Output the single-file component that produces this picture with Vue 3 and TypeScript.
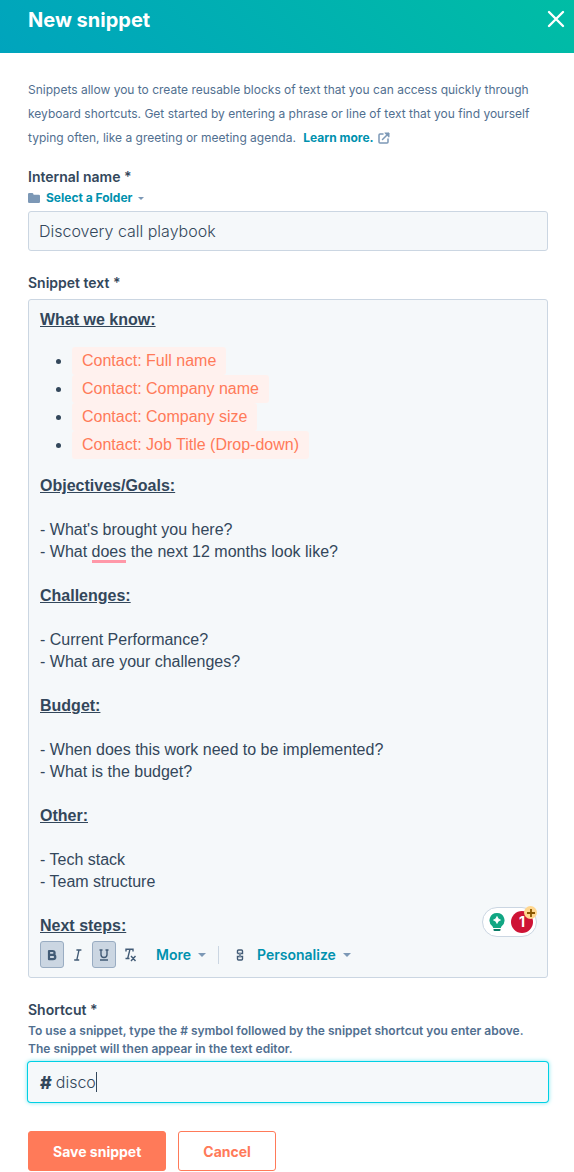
<script setup lang="ts">
import { ref } from 'vue'

interface Section {
  title: string
  lines: string[][]
}

const internalName = ref('Discovery call playbook')
const shortcut = ref('disco')

const tokens: string[] = [
  'Contact: Full name',
  'Contact: Company name',
  'Contact: Company size',
  'Contact: Job Title (Drop-down)',
]

// A line is split in three when its middle part carries a spelling mark.
const sections: Section[] = [
  {
    title: 'Objectives/Goals:',
    lines: [["- What's brought you here?"], ['- What ', 'does', ' the next 12 months look like?']],
  },
  { title: 'Challenges:', lines: [['- Current Performance?'], ['- What are your challenges?']] },
  { title: 'Budget:', lines: [['- When does this work need to be implemented?'], ['- What is the budget?']] },
  { title: 'Other:', lines: [['- Tech stack'], ['- Team structure']] },
]
</script>

<template>
  <section class="panel" aria-labelledby="panel-title">
    <header class="header">
      <h1 id="panel-title">New snippet</h1>
      <button class="close" type="button" aria-label="Close">
        <svg width="18" height="18" viewBox="0 0 18 18" fill="none" stroke="#fff" stroke-width="2.4" stroke-linecap="round">
          <path d="M2 2 16 16M16 2 2 16" />
        </svg>
      </button>
    </header>

    <form class="body" @submit.prevent>
      <p class="intro">
        Snippets allow you to create reusable blocks of text that you can access quickly through
        keyboard shortcuts. Get started by entering a phrase or line of text that you find yourself
        typing often, like a greeting or meeting agenda.
        <a class="learn" href="#">Learn more.<svg width="12" height="12" viewBox="0 0 12 12" fill="none" stroke="#7c98b6" stroke-width="1.5" stroke-linecap="round" stroke-linejoin="round">
          <path d="M5 2H2Q1 2 1 3V10Q1 11 2 11H9Q10 11 10 10V7M4.5 7.5 10.5 1.5" />
          <path d="M7.2 1H11V4.8Z" fill="#7c98b6" stroke-width="1" />
        </svg></a>
      </p>

      <div class="field">
        <label class="label" for="internal-name">Internal name *</label>
        <button class="folder" type="button">
          <svg width="12" height="10" viewBox="0 0 12 10" fill="#7c98b6">
            <path d="M0 1.2Q0 0 1.2 0H4.2Q5.2 0 5.4 1L5.6 1.8H10.8Q12 1.8 12 3V8.8Q12 10 10.8 10H1.2Q0 10 0 8.8Z" />
          </svg>
          <span>Select a Folder</span>
          <svg width="6" height="3" viewBox="0 0 6 3" fill="#7c98b6"><path d="M0 0H6L3 3Z" /></svg>
        </button>
        <input id="internal-name" v-model="internalName" class="input" type="text" />
      </div>

      <div class="field">
        <span id="snippet-label" class="label">Snippet text *</span>
        <div class="editor">
          <div class="content" contenteditable="true" role="textbox" aria-multiline="true" aria-labelledby="snippet-label" spellcheck="false">
            <div class="heading">What we know:</div>
            <ul class="tokens">
              <li v-for="token in tokens" :key="token"><span class="token">{{ token }}</span></li>
            </ul>
            <div v-for="section in sections" :key="section.title" class="section">
              <div class="heading">{{ section.title }}</div>
              <div class="lines">
                <div v-for="(line, i) in section.lines" :key="i" class="line"><span v-for="(part, j) in line" :key="j" :class="{ flagged: j === 1 }">{{ part }}</span></div>
              </div>
            </div>
            <div class="heading">Next steps:</div>
          </div>

          <div class="toolbar" role="toolbar" aria-label="Formatting">
            <button class="tool active" type="button" aria-label="Bold" aria-pressed="true">
              <svg width="14" height="14" viewBox="0 0 14 14" fill="none" stroke="#425b76" stroke-width="2.2" stroke-linejoin="round">
                <path d="M4 3H7.6Q9.6 3 9.6 4.9T7.6 6.8H4ZM4 6.8H8Q10.3 6.8 10.3 9T8 11.2H4Z" />
              </svg>
            </button>
            <button class="tool" type="button" aria-label="Italic">
              <svg width="14" height="14" viewBox="0 0 14 14" fill="none" stroke="#425b76" stroke-width="1.3">
                <path d="M5.4 2H10.4M3.2 12H8.2M8 2 5.8 12" />
              </svg>
            </button>
            <button class="tool active" type="button" aria-label="Underline" aria-pressed="true">
              <svg width="14" height="14" viewBox="0 0 14 14" fill="none" stroke="#425b76" stroke-width="1.4">
                <path d="M2.5 2H5.5M8.5 2H11.5M4 2V6.5Q4 9.5 7 9.5T10 6.5V2M3 12H11" />
              </svg>
            </button>
            <button class="tool" type="button" aria-label="Clear formatting">
              <svg width="14" height="14" viewBox="0 0 14 14" fill="none" stroke="#425b76" stroke-width="1.4">
                <path d="M3 3.5V1.2H10V3.5M7 1.2 4.8 10M2.5 10.5H6.5M8 8 12.5 13M12.5 8 8 13" />
              </svg>
            </button>
            <button class="menu more" type="button">
              More
              <svg width="8" height="4" viewBox="0 0 8 4" fill="#7c98b6"><path d="M0 0H8L4 4Z" /></svg>
            </button>
            <span class="divider"></span>
            <button class="link" type="button" aria-label="Insert link">
              <svg width="8" height="12" viewBox="0 0 8 12" fill="none" stroke="#425b76" stroke-width="1.4">
                <path d="M1.5 4.5V2Q1.5 1 2.5 1H5.5Q6.5 1 6.5 2V4.5H5M3 4.5H1.5M3 7.5H1.5V10Q1.5 11 2.5 11H5.5Q6.5 11 6.5 10V7.5H5M4 3.5V8.5" />
              </svg>
            </button>
            <button class="menu" type="button">
              Personalize
              <svg width="8" height="4" viewBox="0 0 8 4" fill="#7c98b6"><path d="M0 0H8L4 4Z" /></svg>
            </button>
          </div>

          <div class="assistant">
            <svg width="16" height="20" viewBox="0 0 16 20">
              <path d="M8 1A7.4 7.4 0 0 0 3.6 14.4L4.2 16H11.8L12.4 14.4A7.4 7.4 0 0 0 8 1Z" fill="#11a683" />
              <path d="M4.5 17H11.5V18Q11.5 19 10.5 19H5.5Q4.5 19 4.5 18Z" fill="#087b66" />
              <path d="M8 4.5Q8.7 7.3 11.5 8Q8.7 8.7 8 11.5Q7.3 8.7 4.5 8Q7.3 7.3 8 4.5Z" fill="#fff" stroke="#fff" stroke-width="0.8" />
            </svg>
            <span class="count">1</span>
            <span class="plus">
              <svg width="8" height="8" viewBox="0 0 8 8" stroke="#8a5700" stroke-width="1.8"><path d="M4 0V8M0 4H8" /></svg>
            </span>
          </div>
        </div>
      </div>

      <div class="field">
        <label class="label" for="shortcut">Shortcut *</label>
        <p id="shortcut-help" class="help">
          To use a snippet, type the # symbol followed by the snippet shortcut you enter above.<br />
          The snippet will then appear in the text editor.
        </p>
        <label class="shortcut">
          <span class="hash">#</span>
          <input id="shortcut" v-model="shortcut" type="text" aria-describedby="shortcut-help" />
          <span class="caret"></span>
        </label>
      </div>

      <div class="actions">
        <button class="button primary" type="submit">Save snippet</button>
        <button class="button secondary" type="button">Cancel</button>
      </div>
    </form>
  </section>
</template>

<style>
body {
  margin: 0;
  background: #fff;
}
</style>

<style scoped>
.panel,
.panel * {
  box-sizing: border-box;
}

.panel {
  color: #33475b;
  font-family: Inter, "Open Sans", sans-serif;
}

button {
  margin: 0;
  padding: 0;
  border: 0;
  background: none;
  font: inherit;
  cursor: pointer;
}

svg {
  display: block;
  flex: none;
}

.header {
  display: flex;
  align-items: flex-start;
  justify-content: space-between;
  height: 53px;
  padding: 8px 9px 0 28px;
  background: linear-gradient(45deg, #00a4bd, #00bda5);
}

h1 {
  margin: 0;
  color: #fff;
  font-size: 20px;
  font-weight: 700;
  line-height: 24px;
}

.close {
  padding-top: 2px;
}

.body {
  padding: 25px 26px 1px 28px;
}

.intro {
  margin: 0 0 15px;
  color: #516f90;
  font-size: 12px;
  line-height: 24px;
}

.learn {
  display: inline-flex;
  align-items: center;
  gap: 4px;
  height: 24px;
  margin-left: 4px;
  color: #0091ae;
  font-weight: 700;
  text-decoration: none;
  vertical-align: top;
}

.field {
  margin-bottom: 20px;
}

.label {
  display: block;
  font-size: 14px;
  font-weight: 600;
  line-height: 24px;
}

.folder {
  display: flex;
  align-items: center;
  gap: 6px;
  margin-bottom: 4px;
  color: #0091ae;
  font-size: 12px;
  font-weight: 700;
  line-height: 18px;
}

.input {
  display: block;
  width: 100%;
  height: 40px;
  padding: 0 10px;
  border: 1px solid #cbd6e2;
  border-radius: 3px;
  outline: 0;
  background: #f5f8fa;
  color: #33475b;
  font-family: inherit;
  font-size: 16px;
  font-weight: 300;
}

.editor {
  position: relative;
  margin-top: 4px;
  padding: 9px 11px;
  border: 1px solid #cbd6e2;
  border-radius: 3px;
  background: #f5f8fa;
}

.content {
  outline: 0;
  font-family: "Liberation Sans", Arial, sans-serif;
  font-size: 16px;
  line-height: 22px;
}

.heading {
  font-weight: 700;
  text-decoration: underline;
}

.tokens {
  margin: 16px 0;
  padding-left: 32px;
  line-height: 28px;
}

.token {
  display: inline-block;
  padding: 0 10px;
  border-radius: 3px;
  background: #fff1ee;
  color: #ff7a59;
}

.lines {
  padding: 22px 0;
}

.line {
  white-space: pre-wrap;
}

.flagged {
  box-shadow: 0 3px #ff98a8;
}

.toolbar {
  display: flex;
  align-items: center;
  gap: 2px;
  margin-top: 4px;
}

.tool {
  display: flex;
  align-items: center;
  justify-content: center;
  width: 24px;
  height: 27px;
  border: 1px solid transparent;
  border-radius: 3px;
}

.tool.active {
  border-color: #99acc2;
  background: #cbd6e2;
}

.menu {
  display: flex;
  align-items: center;
  gap: 7px;
  color: #0091ae;
  font-size: 14px;
  font-weight: 600;
  line-height: 24px;
}

.more {
  margin-left: 12px;
}

.divider {
  width: 1px;
  height: 18px;
  margin-left: 10px;
  background: #cbd6e2;
}

.link {
  margin: 0 11px 0 15px;
}

.assistant {
  position: absolute;
  right: 10px;
  bottom: 40px;
  display: flex;
  align-items: center;
  gap: 6px;
  height: 30px;
  padding: 0 3px 0 6px;
  border: 1px solid #cbd6e2;
  border-radius: 15px;
  background: #fff;
}

.count {
  width: 22px;
  height: 22px;
  border-radius: 50%;
  background: #ce1335;
  color: #fff;
  font-size: 14px;
  font-weight: 700;
  line-height: 22px;
  text-align: center;
}

.plus {
  position: absolute;
  top: -2px;
  right: -1px;
  display: flex;
  align-items: center;
  justify-content: center;
  width: 13px;
  height: 13px;
  border-radius: 50%;
  background: #ffd78f;
}

.help {
  margin: 0 0 4px;
  color: #516f90;
  font-size: 12px;
  font-weight: 600;
  line-height: 18px;
}

.shortcut {
  display: flex;
  align-items: center;
  height: 40px;
  padding: 0 12px;
  border-radius: 3px;
  background: #f5f8fa;
  box-shadow: 0 0 0 1px #00d0e4, 0 0 4px 1px #7fe5ee;
  font-size: 16px;
  cursor: text;
}

.hash {
  margin-right: 4px;
  font-size: 18px;
  font-weight: 800;
}

.shortcut input {
  field-sizing: content;
  min-width: 0;
  padding: 0;
  border: 0;
  outline: 0;
  background: none;
  color: #33475b;
  font: inherit;
  font-weight: 300;
}

.caret {
  width: 1px;
  height: 20px;
  background: #33475b;
}

.actions {
  display: flex;
  gap: 12px;
  padding-top: 9px;
}

.button {
  height: 40px;
  padding: 0 24px;
  border: 1px solid #ff7a59;
  border-radius: 3px;
  font-size: 14px;
  font-weight: 700;
}

.primary {
  background: #ff7a59;
  color: #fff;
}

.secondary {
  background: #fff;
  color: #ff7a59;
}
</style>
